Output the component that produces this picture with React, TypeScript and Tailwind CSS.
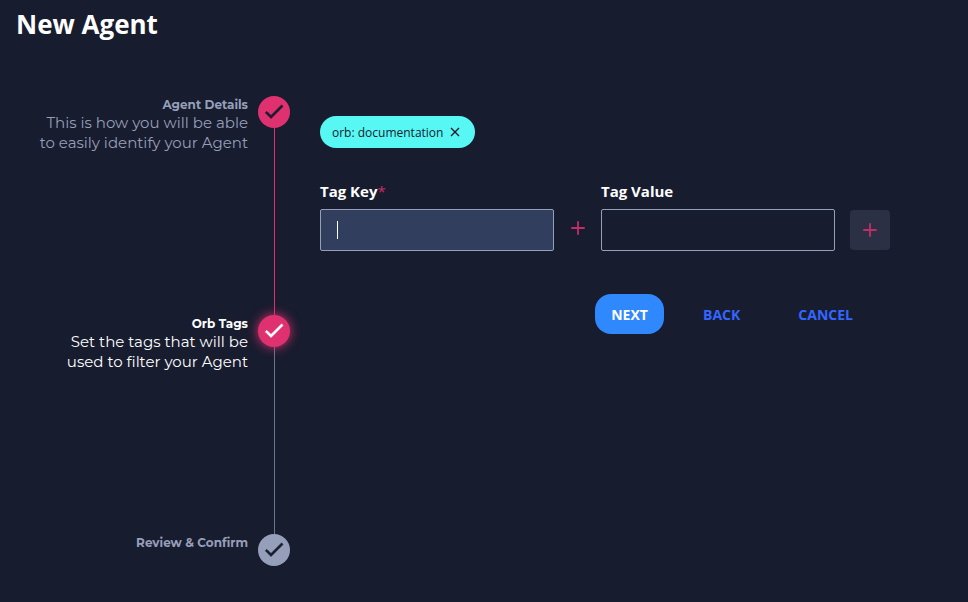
type StepState = "done" | "active" | "pending";

interface Step {
  title: string;
  lines: string[];
  state: StepState;
}

const steps: Step[] = [
  {
    title: "Agent Details",
    lines: ["This is how you will be able", "to easily identify your Agent"],
    state: "done",
  },
  {
    title: "Orb Tags",
    lines: ["Set the tags that will be", "used to filter your Agent"],
    state: "active",
  },
  { title: "Review & Confirm", lines: [], state: "pending" },
];

const textColor: Record<StepState, string> = {
  done: "text-[#969fb9]",
  active: "text-white",
  pending: "text-[#969fb9]",
};

const circleStyle: Record<StepState, string> = {
  done: "bg-[#df316f] text-[#181c2f]",
  active: "bg-[#df316f] text-white shadow-[0_0_11px_0_#df316f]",
  pending: "bg-[#969fb9] text-[#181c2f]",
};

const lineColor: Record<StepState, string> = {
  done: "bg-[#df316f]",
  active: "bg-[#6c748c]",
  pending: "bg-transparent",
};

function Check() {
  return (
    <svg viewBox="0 0.6 24 24" className="size-6" fill="currentColor">
      <path d="M9 16.17 4.83 12l-1.42 1.41L9 19 21 7l-1.41-1.41z" stroke="currentColor" strokeWidth="0.8" />
    </svg>
  );
}

function Plus() {
  return (
    <svg viewBox="0 0 14 14" className="size-3.5" stroke="#c12e66" strokeWidth="1.8">
      <path d="M7 0.3V13.7M0.3 7H13.7" />
    </svg>
  );
}

function Stepper() {
  return (
    <div className="w-[290px] shrink-0 font-['Montserrat','Inter',sans-serif]">
      {steps.map((s, i) => (
        <div key={s.title} className={"flex justify-end gap-2.5 " + (i < 2 ? "h-[219px]" : "h-8")}>
          <div className={"whitespace-nowrap text-right " + textColor[s.state]}>
            <div className="text-xs leading-[17px] font-bold">{s.title}</div>
            {s.lines.map((l) => (
              <div key={l} className="text-[15px] leading-5 font-normal">
                {l}
              </div>
            ))}
          </div>
          <div className="flex w-8 flex-col items-center">
            <div className={"z-10 flex size-8 shrink-0 items-center justify-center rounded-full " + circleStyle[s.state]}>
              <Check />
            </div>
            <div className={"w-px flex-1 " + lineColor[s.state]} />
          </div>
        </div>
      ))}
    </div>
  );
}

export default function App() {
  return (
    <div className="h-[602px] w-[968px] overflow-hidden bg-[#181c2f] font-['Open_Sans',sans-serif] text-white">
      <h1 className="h-24 pt-1.5 pl-4 text-[26px] leading-9 font-bold">New Agent</h1>
      <div className="flex gap-[30px]">
        <Stepper />
        <main className="w-[570px] pt-5">
          <div className="flex h-8 w-[155px] items-center justify-between rounded-full bg-[#57f7f4] pr-[15px] pl-3 text-xs text-[#181c2f]">
            <span className="pt-px">orb: documentation</span>
            <svg viewBox="0 0 10 10" className="size-2.5" stroke="currentColor" strokeWidth="1.4">
              <path d="M1 1 9 9M9 1 1 9" />
            </svg>
          </div>
          <div className="mt-8 flex">
            <div className="w-[234px]">
              <label className="block h-[29px] text-[15px] leading-[22px] font-bold">
                Tag Key<span className="font-normal text-[#c32f66]">*</span>
              </label>
              <div className="flex h-[42px] items-center rounded-xs border border-[#969fb9] bg-[#313e5d] pl-4">
                <div className="h-[18px] w-px bg-white" />
              </div>
            </div>
            <div className="flex w-[47px] justify-center pt-[41px]">
              <Plus />
            </div>
            <div className="w-[234px]">
              <label className="block h-[29px] text-[15px] leading-[22px] font-bold">Tag Value</label>
              <div className="h-[42px] rounded-xs border border-[#969fb9]" />
            </div>
            <button className="mt-[30px] ml-[15px] flex size-10 items-center justify-center rounded bg-[#2b3044]">
              <Plus />
            </button>
          </div>
          <div className="mt-[43px] flex h-10 items-center pl-[275px] text-sm leading-6 font-bold text-[#3366ff]">
            <button className="h-10 w-[69px] rounded-2xl bg-[#3089fc] pt-0.5 text-white">NEXT</button>
            <button className="ml-[39px] pt-0.5">BACK</button>
            <button className="ml-[58px] pt-0.5">CANCEL</button>
          </div>
        </main>
      </div>
    </div>
  );
}
